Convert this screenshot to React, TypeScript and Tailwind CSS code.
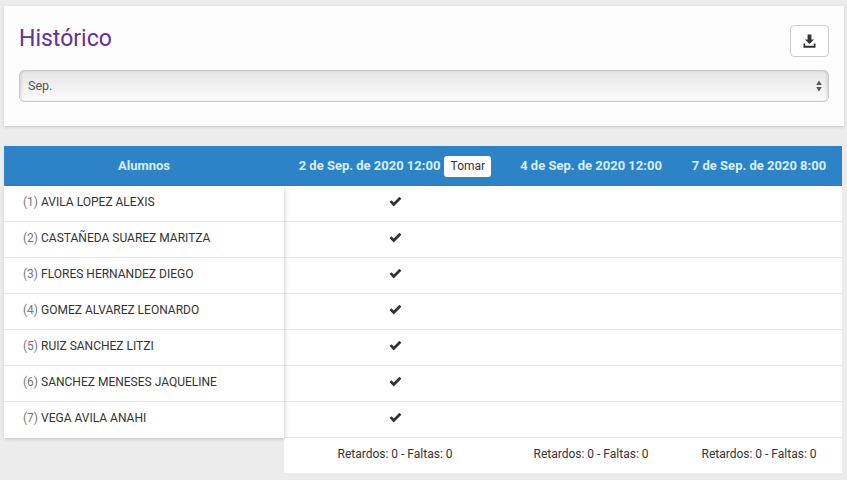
const alumnos = [
  "AVILA LOPEZ ALEXIS",
  "CASTAÑEDA SUAREZ MARITZA",
  "FLORES HERNANDEZ DIEGO",
  "GOMEZ ALVAREZ LEONARDO",
  "RUIZ SANCHEZ LITZI",
  "SANCHEZ MENESES JAQUELINE",
  "VEGA AVILA ANAHI",
];

const Check = () => (
  <svg width="13" height="11" viewBox="0 0 13 11" className="block">
    <path d="M0.6 6 L2.4 4.2 L4.7 6.5 L10.4 0.8 L12.4 2.8 L4.7 10.4 Z" fill="#333333" />
  </svg>
);

const Download = () => (
  <svg width="13" height="14" viewBox="0 0 13 14" className="block">
    <path d="M4.6 0.5 H8.4 V5.5 H11 L6.5 10 L2 5.5 H4.6 Z" fill="#333333" />
    <path d="M0.5 9.5 H2.2 V11.8 H10.8 V9.5 H12.5 V13.8 H0.5 Z" fill="#333333" />
  </svg>
);

const Footer = ({ className }: { className: string }) => (
  <div className={`flex items-center justify-center pb-[3px] text-[12px] text-[#333333] ${className}`}>
    Retardos: 0 - Faltas: 0
  </div>
);

export default function App() {
  return (
    <div className="h-[480px] w-[847px] overflow-hidden bg-[#ececec] pl-1 pt-[6px] font-['Roboto',sans-serif]">
      <div className="h-[120px] w-[840px] bg-[#fdfdfd] pl-[15px] pr-[15px] pt-[19px] shadow-[0_1px_3px_rgba(0,0,0,0.15)]">
        <div className="flex items-start justify-between">
          <h1 className="mt-px text-[23px] leading-[26px] text-[#6b2f8f]">Histórico</h1>
          <button className="flex h-8 w-[39px] items-center justify-center rounded-[4px] border border-[#cccccc] bg-white">
            <Download />
          </button>
        </div>
        <div className="mt-[13px] flex h-8 items-center justify-between rounded-[5px] border border-[#c8c8c8] bg-gradient-to-b from-[#e6e6e6] to-[#fbfbfb] pl-2 pr-[6px] text-[12.5px] text-[#555555] shadow-[inset_2px_0_2px_rgba(0,0,0,0.08),inset_-2px_0_2px_rgba(0,0,0,0.08)]">
          <span>Sep.</span>
          <svg width="6" height="12" viewBox="0 0 6 12" className="block">
            <path d="M3 0.5 L5.8 5 H0.2 Z M3 11.5 L0.2 7 H5.8 Z" fill="#555555" />
          </svg>
        </div>
      </div>

      <div className="w-[838px]">
        <div className="mt-5 flex h-10 items-center bg-[#2d83c5] text-[13px] font-bold text-[#d6f0fb]">
          <div className="w-[280px] text-center">Alumnos</div>
          <div className="flex w-[222px] items-center justify-center gap-[4px]">
            <span className="whitespace-nowrap">2 de Sep. de 2020 12:00</span>
            <button className="flex h-[21px] w-[47px] items-center justify-center rounded-[3px] bg-white text-[12px] font-normal text-[#333333]">
              Tomar
            </button>
          </div>
          <div className="w-[170px] whitespace-nowrap text-center">4 de Sep. de 2020 12:00</div>
          <div className="w-[166px] whitespace-nowrap text-center">7 de Sep. de 2020 8:00</div>
        </div>

        <div className="flex">
          <div className="relative z-10 w-[280px] bg-white shadow-[1px_1px_4px_rgba(0,0,0,0.18)]">
            {alumnos.map((nombre, i) => (
              <div
                key={nombre}
                className={`flex h-9 items-center border-b pb-[4px] pl-[19px] text-[12px] text-[#333333] ${i < alumnos.length - 1 ? "border-[#e8e8e8]" : "border-white"}`}
              >
                <span className="mr-[3px] text-[#777777]">({i + 1})</span>
                {nombre}
              </div>
            ))}
          </div>
          <div className="flex-1 bg-white">
            {alumnos.map((nombre) => (
              <div key={nombre} className="flex h-9 border-b border-[#e8e8e8] pb-[5px]">
                <div className="flex w-[222px] items-center justify-center">
                  <Check />
                </div>
              </div>
            ))}
          </div>
        </div>

        <div className="flex">
          <div className="w-[280px]" />
          <div className="flex h-[35px] flex-1 bg-white">
            <Footer className="w-[222px]" />
            <Footer className="w-[170px]" />
            <Footer className="w-[166px]" />
          </div>
        </div>
      </div>
    </div>
  );
}
